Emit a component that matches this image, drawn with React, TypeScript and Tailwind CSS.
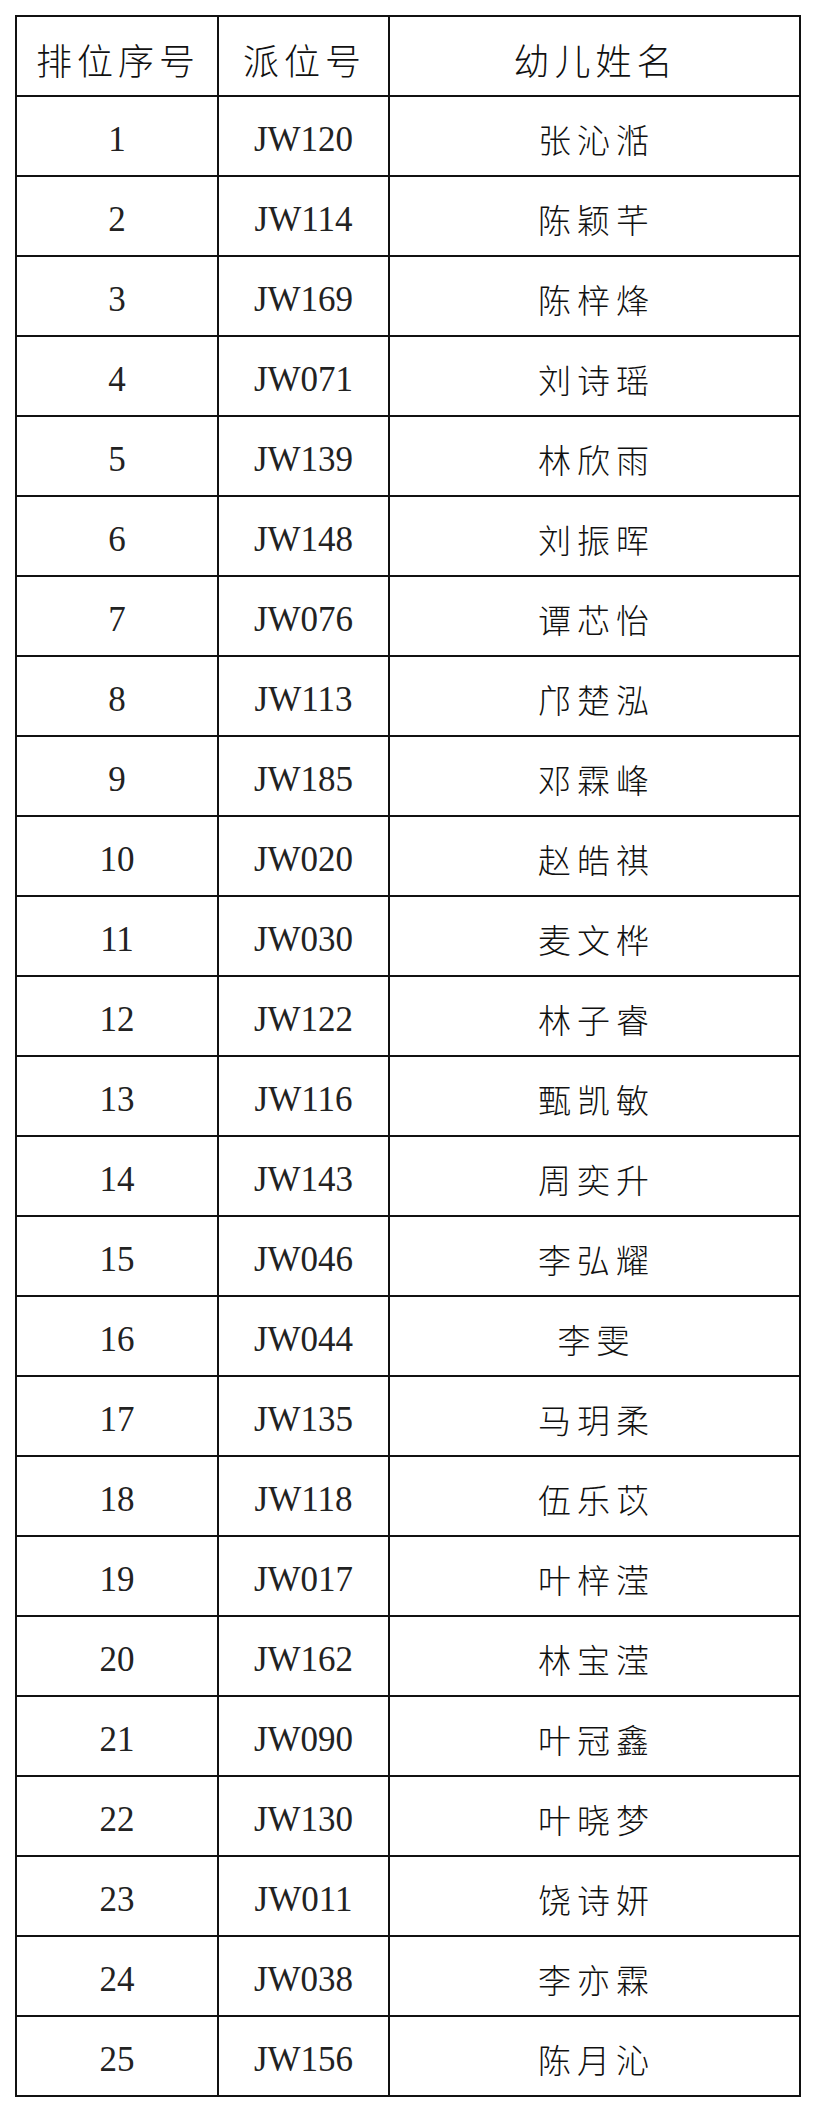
const rows: [string, string][] = [
  ["JW120", "张沁湉"],
  ["JW114", "陈颖芊"],
  ["JW169", "陈梓烽"],
  ["JW071", "刘诗瑶"],
  ["JW139", "林欣雨"],
  ["JW148", "刘振晖"],
  ["JW076", "谭芯怡"],
  ["JW113", "邝楚泓"],
  ["JW185", "邓霖峰"],
  ["JW020", "赵皓祺"],
  ["JW030", "麦文桦"],
  ["JW122", "林子睿"],
  ["JW116", "甄凯敏"],
  ["JW143", "周奕升"],
  ["JW046", "李弘耀"],
  ["JW044", "李雯"],
  ["JW135", "马玥柔"],
  ["JW118", "伍乐苡"],
  ["JW017", "叶梓滢"],
  ["JW162", "林宝滢"],
  ["JW090", "叶冠鑫"],
  ["JW130", "叶晓梦"],
  ["JW011", "饶诗妍"],
  ["JW038", "李亦霖"],
  ["JW156", "陈月沁"],
];

const cjk = "font-['Noto_Sans_CJK_SC',sans-serif]";
const num = "font-['Liberation_Serif','Noto_Sans_CJK_SC',serif]";
const cell = "border-2 border-[#111] text-center align-middle p-0 pt-[6px]";

export default function App() {
  return (
    <div className="min-h-screen bg-white pt-[15px] pl-[15px] text-[#111]">
      <table className="border-collapse w-[784px] table-fixed">
        <colgroup>
          <col className="w-[202px]" />
          <col className="w-[171px]" />
          <col className="w-[411px]" />
        </colgroup>
        <thead>
          <tr className="h-[80px]">
            <th className={`${cell} ${cjk} font-light text-[36px] tracking-[5px] pl-[2px]`}>排位序号</th>
            <th className={`${cell} ${cjk} font-light text-[36px] tracking-[5px] pl-[2px]`}>派位号</th>
            <th className={`${cell} ${cjk} font-light text-[36px] tracking-[5px] pl-[2px]`}>幼儿姓名</th>
          </tr>
        </thead>
        <tbody>
          {rows.map(([code, name], i) => (
            <tr key={code} className="h-[80px]">
              <td className={`${cell} ${num} text-[35px] leading-none text-[#222]`}>{i + 1}</td>
              <td className={`${cell} ${num} text-[35px] leading-none text-[#222]`}>{code}</td>
              <td className={`${cell} ${cjk} font-light text-[33px] leading-none tracking-[6px] pl-[4px]`}>{name}</td>
            </tr>
          ))}
        </tbody>
      </table>
    </div>
  );
}
